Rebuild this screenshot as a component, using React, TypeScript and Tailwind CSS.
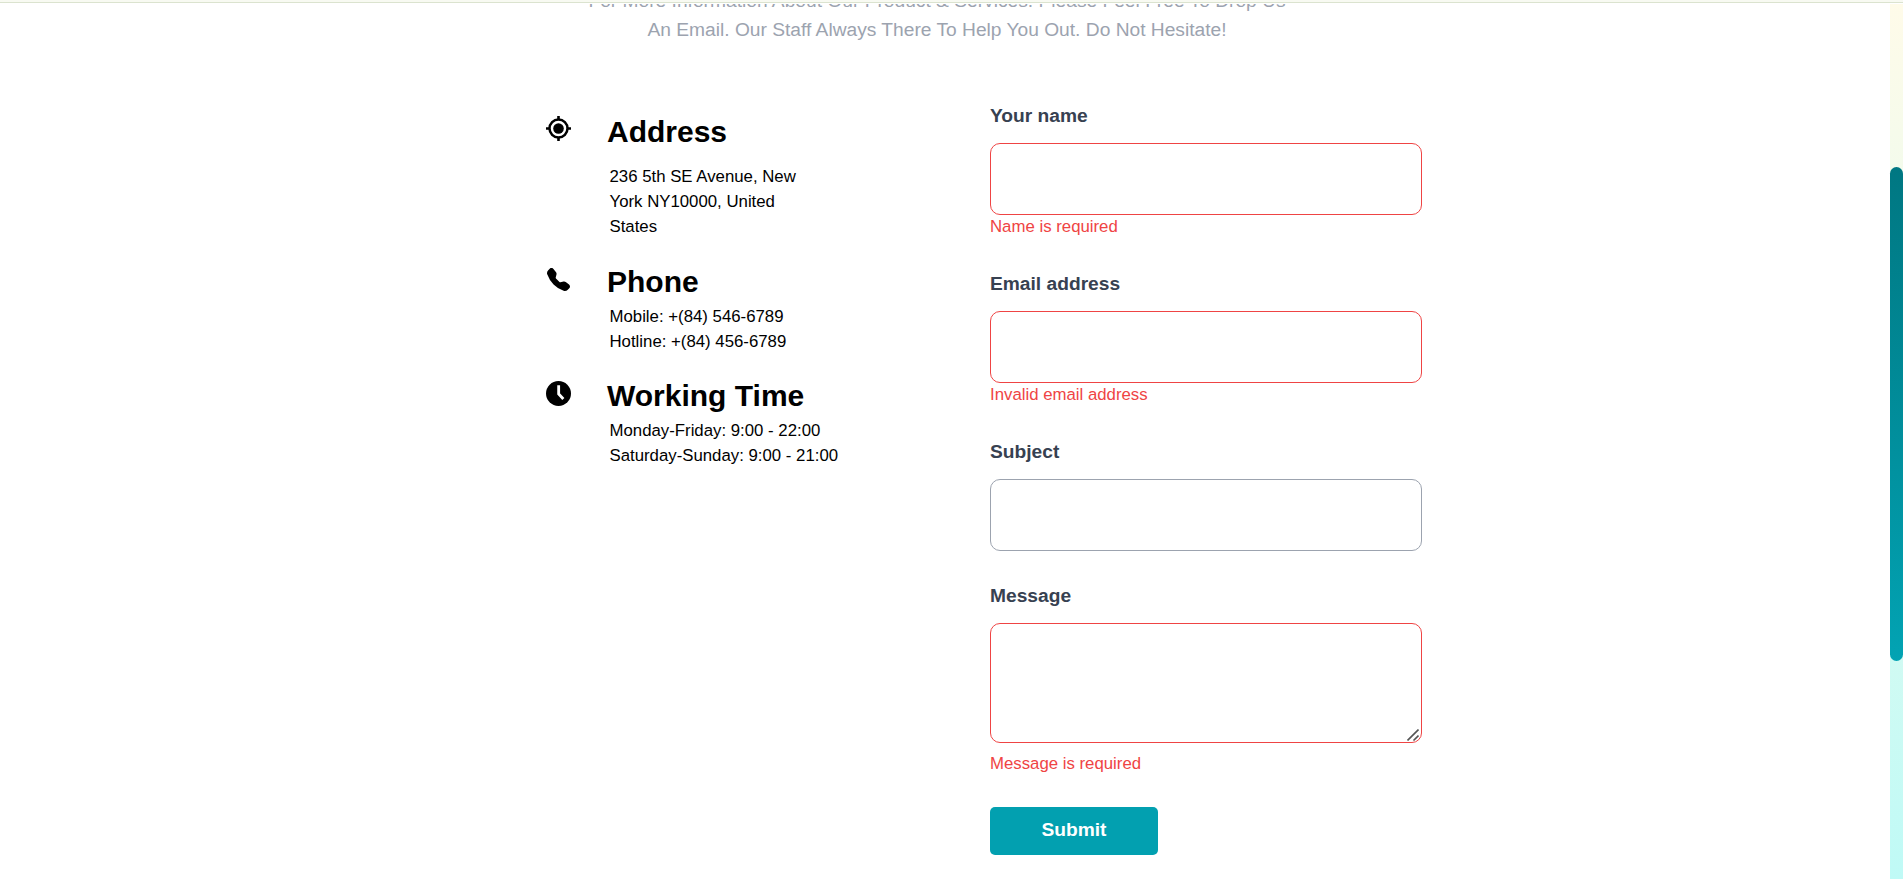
import { BsTelephoneFill } from "react-icons/bs";
import type { ReactNode } from "react";

function TargetIcon() {
  return (
    <svg viewBox="0 0 25 25" className="mt-[15px] size-[25px]" fill="none" stroke="currentColor">
      <circle cx="12.5" cy="12.5" r="5.3" fill="currentColor" stroke="none" />
      <circle cx="12.5" cy="12.5" r="9" strokeWidth="2.5" />
      <path d="M12.5 0v4M12.5 21v4M0 12.5h4M21 12.5h4" strokeWidth="2.6" />
    </svg>
  );
}

function ClockIcon() {
  return (
    <svg viewBox="0 0 75 75" className="mt-[16px] size-[25px]" fill="none">
      <circle cx="37.5" cy="37.5" r="37.5" fill="currentColor" />
      <path d="M38 13V38.5L52 54" stroke="white" strokeWidth="8.5" />
    </svg>
  );
}

function Info({ icon, title, className, children }: { icon: ReactNode; title: string; className: string; children: ReactNode }) {
  return (
    <div className={`flex ${className}`}>
      <div className="w-[61px] shrink-0">{icon}</div>
      <div className="pt-2">
        <h2 className="text-[30px] leading-[45px] font-bold">{title}</h2>
        {children}
      </div>
    </div>
  );
}

function Label({ children }: { children: ReactNode }) {
  return <label className="block text-[19.2px] leading-[31px] font-bold text-[#374151]">{children}</label>;
}

export default function App() {
  return (
    <div className="relative flex h-[879px] w-full overflow-hidden bg-white font-['Liberation_Sans',Arial,sans-serif] text-[16.8px] leading-[25px] text-black">
      <div className="absolute inset-x-0 top-0 z-10 h-[4px] bg-white">
        <div className="h-[3px] border-b border-[#dbe3cf] bg-[#f8faf2]" />
      </div>
      <div className="flex-1 overflow-hidden">
        <p className="mx-auto -mt-[14px] w-[720px] -translate-x-[8px] text-center text-[19.2px] leading-[29px] text-[#9ca3af]">
          For More Information About Our Product &amp; Services. Please Feel Free To Drop Us<br />
          An Email. Our Staff Always There To Help You Out. Do Not Hesitate!
        </p>
        <div className="ml-[546px] flex pt-[56px]">
          <div className="w-[444px] pt-px">
            <Info icon={<TargetIcon />} title="Address" className="h-[150px]">
              <p className="mt-[10px] ml-[2.5px] w-[200px]">236 5th SE Avenue, New York NY10000, United States</p>
            </Info>
            <Info icon={<BsTelephoneFill className="mt-[17px] ml-[1px] size-[23px]" />} title="Phone" className="h-[114px]">
              <p className="ml-[2.5px]">Mobile: +(84) 546-6789<br />Hotline: +(84) 456-6789</p>
            </Info>
            <Info icon={<ClockIcon />} title="Working Time" className="">
              <p className="ml-[2.5px]">Monday-Friday: 9:00 - 22:00<br />Saturday-Sunday: 9:00 - 21:00</p>
            </Info>
          </div>
          <form className="w-[432px]">
            <div className="h-[168px]">
              <Label>Your name</Label>
              <input className="mt-[12px] block h-[72px] w-full rounded-[10px] border border-[#ef4444] px-4" />
              <p className="-mt-px text-[#ef4444]">Name is required</p>
            </div>
            <div className="h-[168px]">
              <Label>Email address</Label>
              <input className="mt-[12px] block h-[72px] w-full rounded-[10px] border border-[#ef4444] px-4" />
              <p className="-mt-px text-[#ef4444]">Invalid email address</p>
            </div>
            <div className="h-[144px]">
              <Label>Subject</Label>
              <input className="mt-[12px] block h-[72px] w-full rounded-[10px] border border-[#9ca3af] px-4" />
            </div>
            <Label>Message</Label>
            <div className="relative mt-[12px]">
              <textarea className="block h-[120px] w-full resize-none rounded-[10px] border border-[#ef4444] px-4" />
              <svg viewBox="0 0 12 12" className="absolute right-[3px] bottom-[2px] size-3" fill="none" stroke="#555" strokeWidth="1.6">
                <path d="M0.5 11.5L11.5 0.5M6.5 11.5L11.5 6.5" />
              </svg>
            </div>
            <p className="mt-[8px] text-[#ef4444]">Message is required</p>
            <button type="button" className="mt-[31px] block h-[48px] w-[168px] rounded-[5px] bg-[#02a0b0] pb-[4px] text-[19.2px] font-bold text-white">Submit</button>
          </form>
        </div>
      </div>
      <div className="w-[13px] bg-linear-to-b from-[#fffbe9] to-[#bffaf6] pt-[167px]">
        <div className="h-[494px] rounded-full bg-linear-to-b from-[#007782] to-[#02a3b3]" />
      </div>
    </div>
  );
}
